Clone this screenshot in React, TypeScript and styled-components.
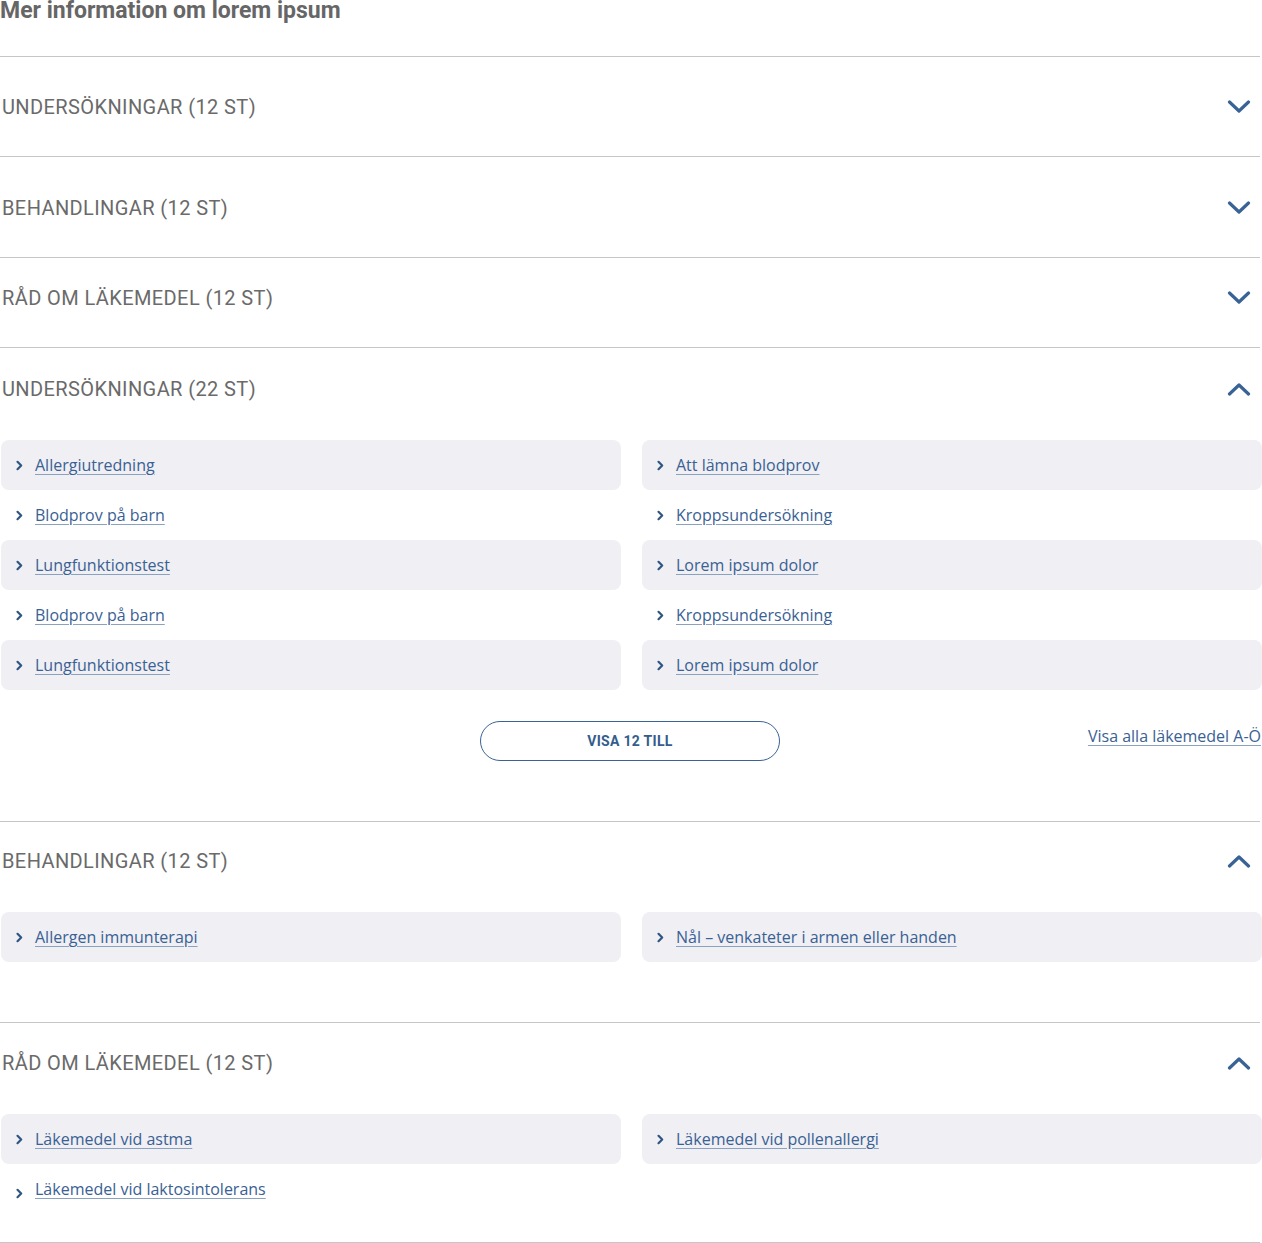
import styled, { createGlobalStyle } from "styled-components";

const GlobalStyle = createGlobalStyle`
  body {
    margin: 0;
    background: #ffffff;
    font-family: Roboto, "Liberation Sans", sans-serif;
  }
`;

const Page = styled.div`
  width: 1262px;
`;

const Title = styled.h2`
  margin: 0;
  height: 56px;
  font-size: 23px;
  line-height: 22px;
  font-weight: 700;
  color: #666666;
`;

const Section = styled.section<{ $bottom: number }>`
  width: 1260px;
  border-top: 1px solid #c6c6c6;
  padding-bottom: ${(p) => p.$bottom}px;
`;

const Header = styled.div<{ $top: number }>`
  display: flex;
  align-items: center;
  justify-content: space-between;
  padding: ${(p) => p.$top}px 9px 37px 2px;
  height: 24px;
`;

const HeaderText = styled.span`
  font-size: 20px;
  line-height: 24px;
  letter-spacing: 0.4px;
  color: #6a6a6a;
  text-transform: uppercase;
`;

const Items = styled.div`
  display: grid;
  grid-template-columns: 620px 620px;
  grid-auto-rows: 50px;
  column-gap: 21px;
  width: 1261px;
  margin: 2px 0 0 1px;
`;

const Item = styled.div<{ $shade: boolean; $low?: boolean }>`
  display: flex;
  align-items: center;
  gap: 11px;
  padding-left: 14px;
  border-radius: 8px;
  background: ${(p) => (p.$shade ? "#efeff4" : "transparent")};

  svg {
    flex: none;
    margin-top: ${(p) => (p.$low ? "8px" : "0")};
  }
`;

const Link = styled.a`
  font-family: "Open Sans", "Liberation Sans", sans-serif;
  font-size: 16px;
  color: #3a6193;
  text-decoration: underline;
  text-decoration-color: #8aa2c0;
  text-underline-offset: 3px;
  cursor: pointer;
`;

const Footer = styled.div`
  display: grid;
  grid-template-columns: 1fr 300px 1fr;
  margin-top: 31px;
  width: 1260px;
`;

const MoreButton = styled.button`
  grid-column: 2;
  height: 40px;
  border: 1px solid #3a6395;
  border-radius: 20px;
  background: #ffffff;
  color: #335d8d;
  font-family: Roboto, "Liberation Sans", sans-serif;
  font-size: 14px;
  font-weight: 700;
  letter-spacing: 0.3px;
  cursor: pointer;
`;

const AllLink = styled(Link)`
  justify-self: end;
  align-self: start;
  margin-top: 4px;
  margin-right: -1px;
`;

function ChevronBig({ up }: { up?: boolean }) {
  return (
    <svg width="24" height="14" viewBox="0 0 24 14">
      <polyline
        points={up ? "2.5,12 12,3 21.5,12" : "2.5,2 12,11 21.5,2"}
        fill="none"
        stroke="#3a6395"
        strokeWidth="3.2"
        strokeLinecap="round"
        strokeLinejoin="round"
      />
    </svg>
  );
}

function ChevronSmall() {
  return (
    <svg width="9" height="11" viewBox="0 0 9 11">
      <polyline
        points="2.5,1.8 6.2,5.5 2.5,9.2"
        fill="none"
        stroke="#2f5680"
        strokeWidth="2.2"
        strokeLinecap="round"
        strokeLinejoin="round"
      />
    </svg>
  );
}

type Sec = {
  title: string;
  open: boolean;
  top: number;
  bottom: number;
  items?: string[];
  more?: boolean;
  lowLast?: boolean;
};

const sections: Sec[] = [
  { title: "Undersökningar (12 st)", open: false, top: 38, bottom: 0 },
  { title: "Behandlingar (12 st)", open: false, top: 39, bottom: 0 },
  { title: "Råd om läkemedel (12 st)", open: false, top: 28, bottom: 0 },
  {
    title: "Undersökningar (22 st)",
    open: true,
    top: 29,
    bottom: 60,
    more: true,
    items: [
      "Allergiutredning",
      "Att lämna blodprov",
      "Blodprov på barn",
      "Kroppsundersökning",
      "Lungfunktionstest",
      "Lorem ipsum dolor",
      "Blodprov på barn",
      "Kroppsundersökning",
      "Lungfunktionstest",
      "Lorem ipsum dolor",
    ],
  },
  {
    title: "Behandlingar (12 st)",
    open: true,
    top: 27,
    bottom: 60,
    items: ["Allergen immunterapi", "Nål – venkateter i armen eller handen"],
  },
  {
    title: "Råd om läkemedel (12 st)",
    open: true,
    top: 28,
    bottom: 28,
    lowLast: true,
    items: [
      "Läkemedel vid astma",
      "Läkemedel vid pollenallergi",
      "Läkemedel vid laktosintolerans",
    ],
  },
];

export default function App() {
  return (
    <Page>
      <GlobalStyle />
      <Title>Mer information om lorem ipsum</Title>
      {sections.map((s, i) => (
        <Section key={i} $bottom={s.bottom}>
          <Header $top={s.top}>
            <HeaderText>{s.title}</HeaderText>
            <ChevronBig up={s.open} />
          </Header>
          {s.items && (
            <Items>
              {s.items.map((it, j) => (
                <Item
                  key={j}
                  $shade={Math.floor(j / 2) % 2 === 0}
                  $low={s.lowLast && j === s.items!.length - 1}
                >
                  <ChevronSmall />
                  <Link>{it}</Link>
                </Item>
              ))}
            </Items>
          )}
          {s.more && (
            <Footer>
              <MoreButton>VISA 12 TILL</MoreButton>
              <AllLink>Visa alla läkemedel A-Ö</AllLink>
            </Footer>
          )}
        </Section>
      ))}
      <Section $bottom={0} />
    </Page>
  );
}
